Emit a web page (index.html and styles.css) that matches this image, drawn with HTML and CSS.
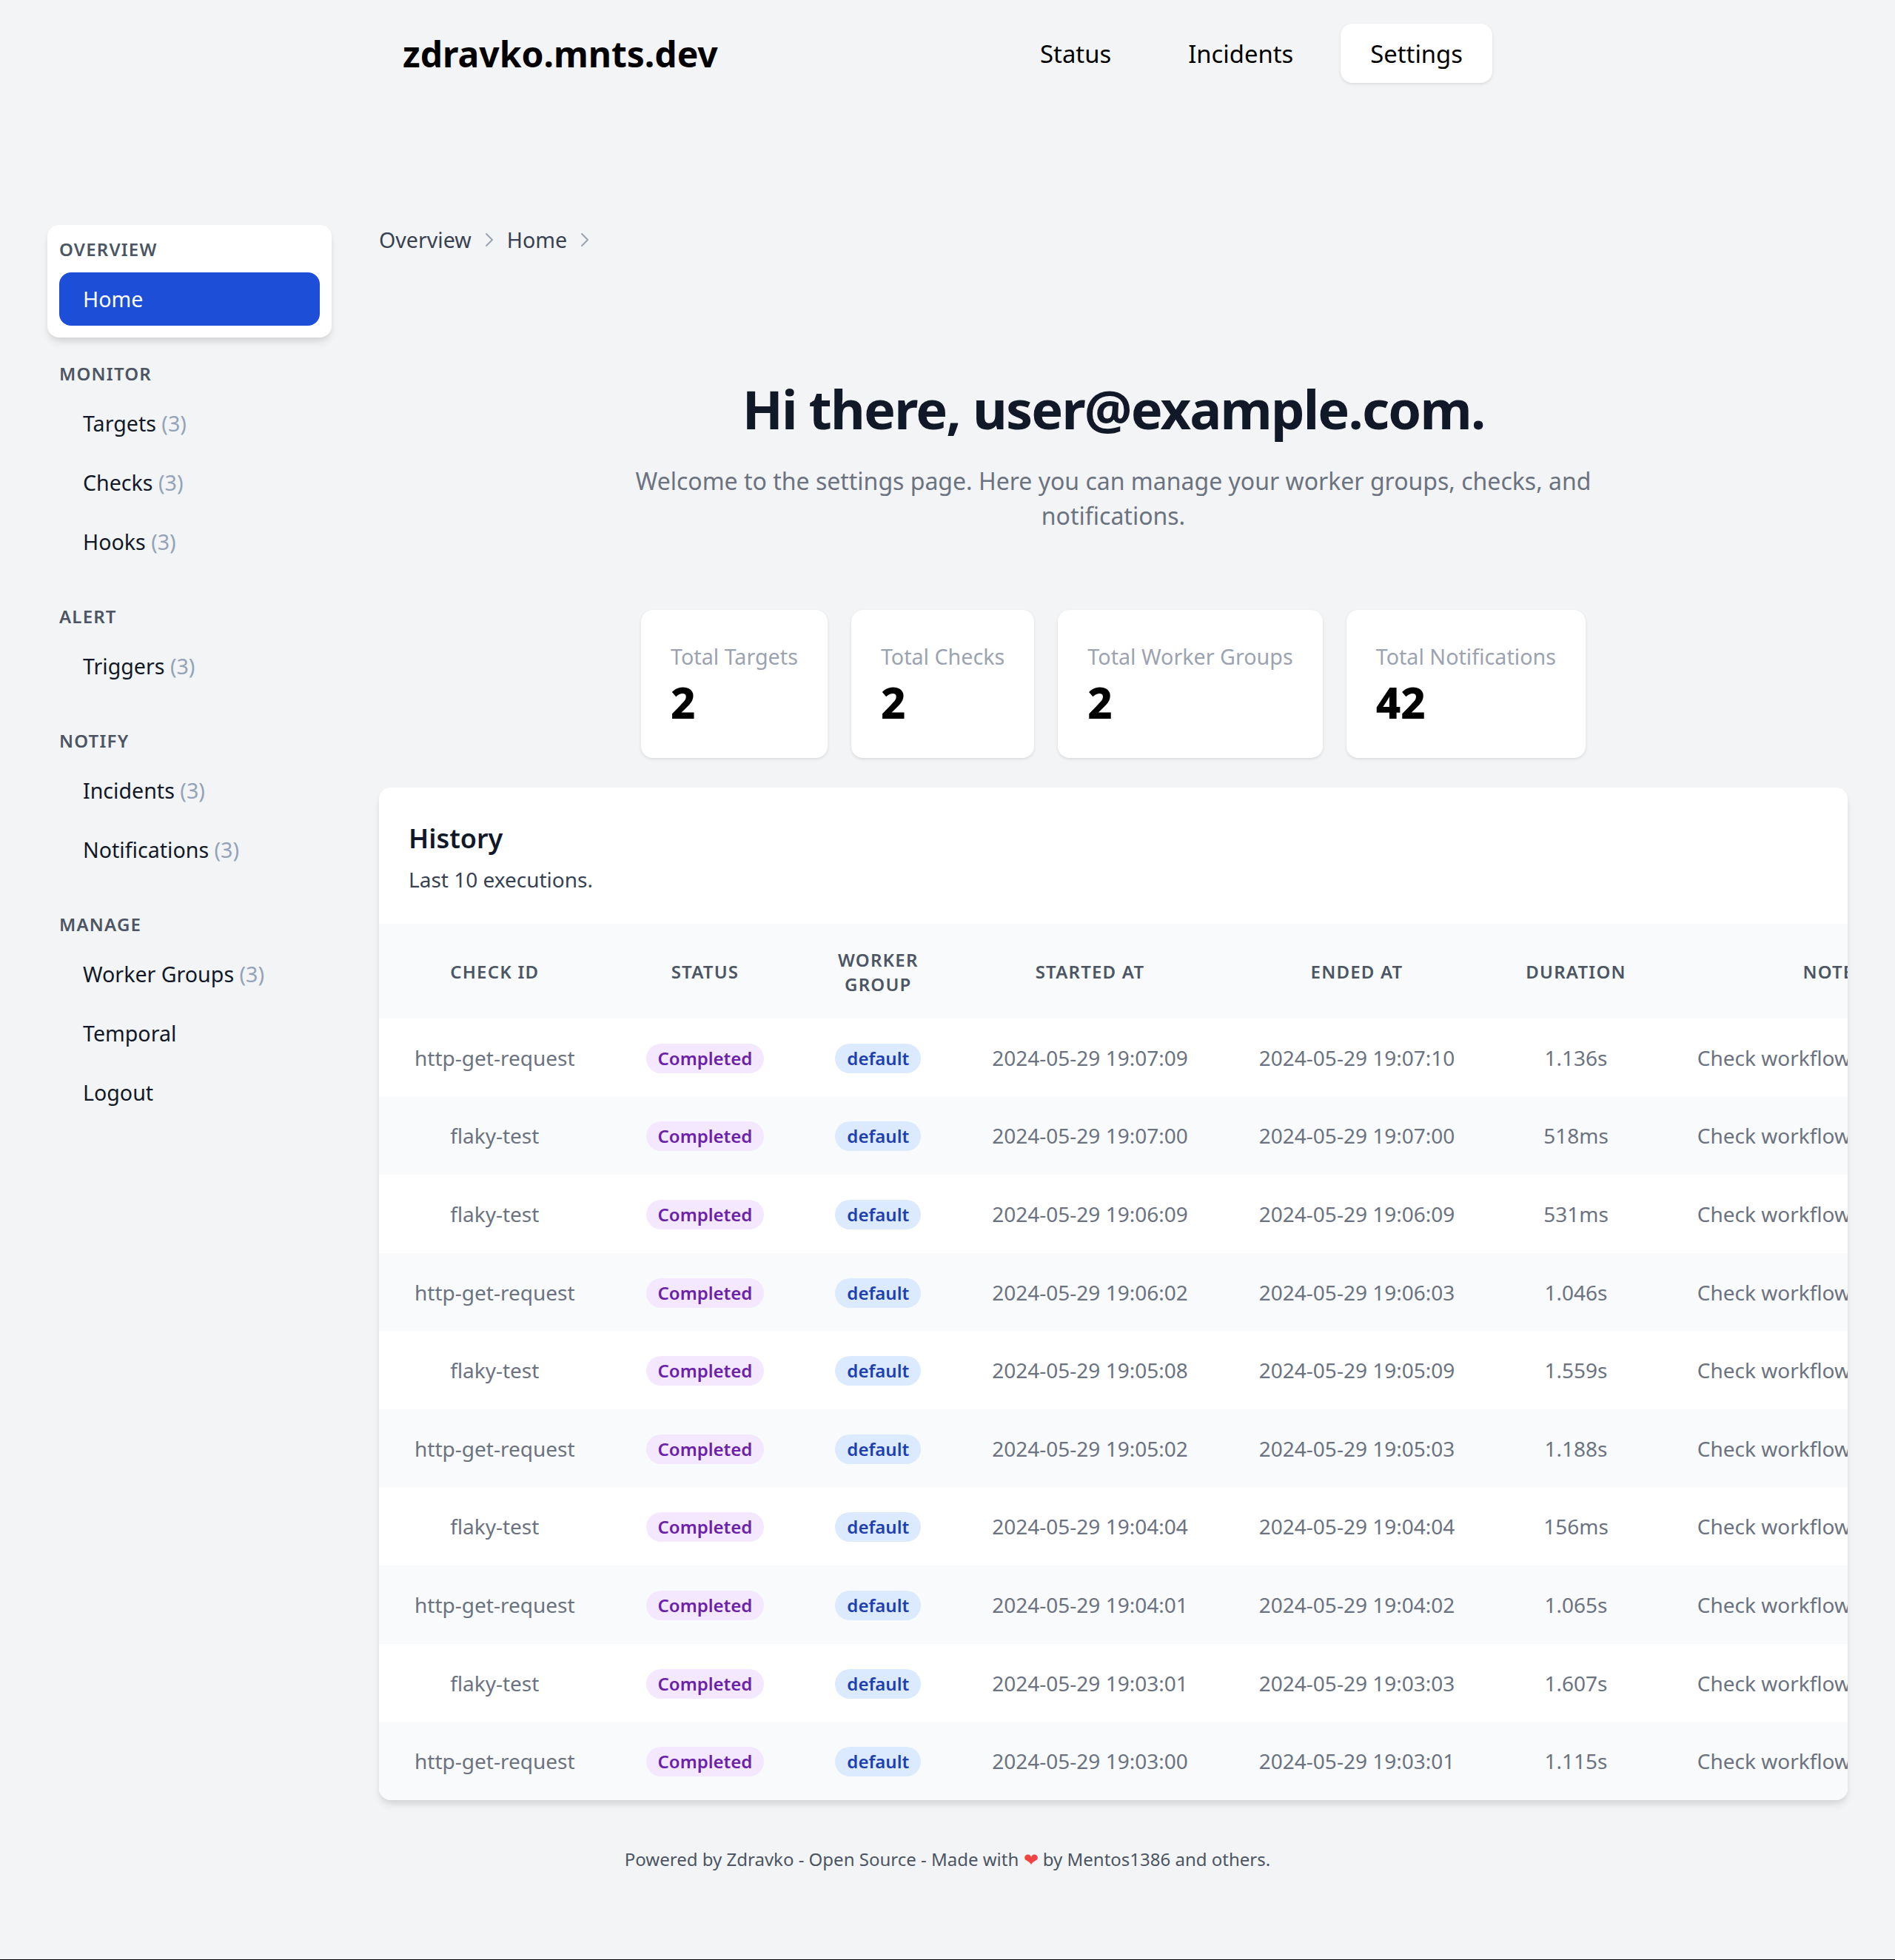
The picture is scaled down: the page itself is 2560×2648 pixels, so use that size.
FILE: index.html
```html
<!DOCTYPE html>
<html lang="en">
  <head>
    <meta charset="UTF-8" />
    <meta name="viewport" content="width=device-width, initial-scale=1.0" />
    <title>Zdravko - Settings</title>
    <link rel="stylesheet" href="styles.css">
  </head>

  <body>
    <header class="topbar">
      <a class="logo" href="#">zdravko.mnts.dev</a>
      <nav class="topnav">
        <a href="#">Status</a>
        <a href="#">Incidents</a>
        <a href="#" class="valgt">Settings</a>
      </nav>
    </header>

    <div class="layout">
      <aside class="sidebar">
        <section class="menu menu_active">
          <h3>Overview</h3>
          <a href="#" class="valgt">Home</a>
        </section>
        <section class="menu">
          <h3>Monitor</h3>
          <a href="#">Targets <span>(3)</span></a>
          <a href="#">Checks <span>(3)</span></a>
          <a href="#">Hooks <span>(3)</span></a>
        </section>
        <section class="menu">
          <h3>Alert</h3>
          <a href="#">Triggers <span>(3)</span></a>
        </section>
        <section class="menu">
          <h3>Notify</h3>
          <a href="#">Incidents <span>(3)</span></a>
          <a href="#">Notifications <span>(3)</span></a>
        </section>
        <section class="menu">
          <h3>Manage</h3>
          <a href="#">Worker Groups <span>(3)</span></a>
          <a href="#">Temporal</a>
          <a href="#">Logout</a>
        </section>
      </aside>

      <main class="content">
        <ol class="breadcrumb">
          <li>Overview</li>
          <li class="chevron">
            <svg viewBox="0 0 6 10" width="12" height="20"><path d="M1 1l4 4-4 4" fill="none" stroke="#9ca3af" stroke-width="1" stroke-linecap="round" stroke-linejoin="round" /></svg>
          </li>
          <li>Home</li>
          <li class="chevron">
            <svg viewBox="0 0 6 10" width="12" height="20"><path d="M1 1l4 4-4 4" fill="none" stroke="#9ca3af" stroke-width="1" stroke-linecap="round" stroke-linejoin="round" /></svg>
          </li>
        </ol>

        <section class="intro">
          <h1>Hi there, user@example.com.</h1>
          <p>Welcome to the settings page. Here you can manage your worker groups, checks, and notifications.</p>
        </section>

        <section class="stats">
          <article class="stat"><p>Total Targets</p><strong>2</strong></article>
          <article class="stat"><p>Total Checks</p><strong>2</strong></article>
          <article class="stat"><p>Total Worker Groups</p><strong>2</strong></article>
          <article class="stat"><p>Total Notifications</p><strong>42</strong></article>
        </section>

        <section class="history">
          <div class="history_head">
            <h2>History</h2>
            <p>Last 10 executions.</p>
          </div>
          <table>
            <thead>
              <tr>
                <th>Check ID</th>
                <th>Status</th>
                <th>Worker Group</th>
                <th>Started At</th>
                <th>Ended At</th>
                <th>Duration</th>
                <th>Note</th>
              </tr>
            </thead>
            <tbody>
              <tr><td>http-get-request</td><td><span class="badge done">Completed</span></td><td><span class="badge group">default</span></td><td>2024-05-29 19:07:09</td><td>2024-05-29 19:07:10</td><td>1.136s</td><td>Check workflow completed</td></tr>
              <tr><td>flaky-test</td><td><span class="badge done">Completed</span></td><td><span class="badge group">default</span></td><td>2024-05-29 19:07:00</td><td>2024-05-29 19:07:00</td><td>518ms</td><td>Check workflow completed</td></tr>
              <tr><td>flaky-test</td><td><span class="badge done">Completed</span></td><td><span class="badge group">default</span></td><td>2024-05-29 19:06:09</td><td>2024-05-29 19:06:09</td><td>531ms</td><td>Check workflow completed</td></tr>
              <tr><td>http-get-request</td><td><span class="badge done">Completed</span></td><td><span class="badge group">default</span></td><td>2024-05-29 19:06:02</td><td>2024-05-29 19:06:03</td><td>1.046s</td><td>Check workflow completed</td></tr>
              <tr><td>flaky-test</td><td><span class="badge done">Completed</span></td><td><span class="badge group">default</span></td><td>2024-05-29 19:05:08</td><td>2024-05-29 19:05:09</td><td>1.559s</td><td>Check workflow completed</td></tr>
              <tr><td>http-get-request</td><td><span class="badge done">Completed</span></td><td><span class="badge group">default</span></td><td>2024-05-29 19:05:02</td><td>2024-05-29 19:05:03</td><td>1.188s</td><td>Check workflow completed</td></tr>
              <tr><td>flaky-test</td><td><span class="badge done">Completed</span></td><td><span class="badge group">default</span></td><td>2024-05-29 19:04:04</td><td>2024-05-29 19:04:04</td><td>156ms</td><td>Check workflow completed</td></tr>
              <tr><td>http-get-request</td><td><span class="badge done">Completed</span></td><td><span class="badge group">default</span></td><td>2024-05-29 19:04:01</td><td>2024-05-29 19:04:02</td><td>1.065s</td><td>Check workflow completed</td></tr>
              <tr><td>flaky-test</td><td><span class="badge done">Completed</span></td><td><span class="badge group">default</span></td><td>2024-05-29 19:03:01</td><td>2024-05-29 19:03:03</td><td>1.607s</td><td>Check workflow completed</td></tr>
              <tr><td>http-get-request</td><td><span class="badge done">Completed</span></td><td><span class="badge group">default</span></td><td>2024-05-29 19:03:00</td><td>2024-05-29 19:03:01</td><td>1.115s</td><td>Check workflow completed</td></tr>
            </tbody>
          </table>
        </section>
      </main>
    </div>

    <footer class="pagefoot">
      Powered by Zdravko - Open Source - Made with <span class="heart">❤</span> by Mentos1386 and others.
    </footer>
  </body>
</html>
```

FILE: styles.css
```css
* {
  box-sizing: border-box;
  margin: 0;
  padding: 0;
}

html {
  background-color: #000;
}

body {
  background-color: #f3f4f6;
  color: #111827;
  font-family: "Noto Sans", sans-serif;
  font-size: 28px;
  height: 2647px;
  overflow: hidden;
}

a {
  color: inherit;
  text-decoration: none;
}

.topbar {
  display: flex;
  justify-content: space-between;
  align-items: center;
  width: 1472px;
  margin: 0 auto;
  padding-top: 32px;
}

.logo {
  color: #000;
  font-size: 48px;
  font-weight: 700;
}

.topnav {
  display: flex;
  gap: 24px;
}

.topnav a {
  color: #000;
  font-size: 32.8px;
  height: 80px;
  line-height: 82px;
  padding: 0 40px;
  border-radius: 16px;
}

.topnav .valgt {
  background-color: #fff;
  box-shadow: 0 2px 4px rgba(0, 0, 0, 0.1);
}

.layout {
  display: flex;
  gap: 64px;
  padding: 192px 64px 0;
}

.sidebar {
  display: flex;
  flex-direction: column;
  gap: 16px;
  flex: 0 0 384px;
}

.menu {
  display: flex;
  flex-direction: column;
  gap: 8px;
  padding: 16px;
}

.menu_active {
  background-color: #fff;
  border-radius: 16px;
  box-shadow: 0 8px 12px -2px rgba(0, 0, 0, 0.1), 0 4px 8px -2px rgba(0, 0, 0, 0.06);
}

.menu h3 {
  color: #4b5563;
  font-size: 24px;
  font-weight: 600;
  line-height: 34px;
  letter-spacing: 1.2px;
  text-transform: uppercase;
  margin-bottom: 6px;
}

.menu a {
  color: #111827;
  font-size: 28.6px;
  line-height: 72px;
  padding: 0 32px;
  border-radius: 16px;
}

.menu a span {
  color: #94a3b8;
}

.menu .valgt {
  background-color: #1d4ed8;
  color: #fff;
}

.content {
  flex: 1;
  min-width: 0;
}

.breadcrumb {
  display: flex;
  align-items: center;
  gap: 18px;
  list-style: none;
  color: #374151;
  font-size: 28.6px;
  line-height: 40px;
}

.chevron {
  display: flex;
}

.intro {
  text-align: center;
  margin-top: 168px;
}

.intro h1 {
  color: #111827;
  font-size: 72px;
  font-weight: 700;
  line-height: 80px;
  letter-spacing: -1.8px;
}

.intro p {
  max-width: 1344px;
  margin: 34px auto 0;
  color: #6b7280;
  font-size: 32px;
  line-height: 47px;
}

.stats {
  display: flex;
  justify-content: center;
  gap: 32px;
  margin-top: 104px;
}

.stat {
  height: 200px;
  padding: 40px;
  background-color: #fff;
  border-radius: 16px;
  box-shadow: 0 2px 4px rgba(0, 0, 0, 0.1);
}

.stat p {
  color: #9ca3af;
  font-size: 28.7px;
  line-height: 40px;
  margin-top: 3px;
}

.stat strong {
  display: block;
  color: #000;
  font-size: 58px;
  font-weight: 800;
  line-height: 72px;
  margin-top: 6px;
}

.history {
  margin-top: 40px;
  background-color: #fff;
  border-radius: 16px;
  box-shadow: 0 8px 12px -2px rgba(0, 0, 0, 0.1), 0 4px 8px -2px rgba(0, 0, 0, 0.06);
  overflow: hidden;
}

.history_head {
  height: 184px;
  padding: 40px;
}

.history_head h2 {
  color: #111827;
  font-size: 36px;
  font-weight: 600;
  line-height: 58px;
}

.history_head p {
  color: #374151;
  font-size: 28px;
  line-height: 52px;
}

table {
  border-collapse: collapse;
  width: 100%;
}

th {
  height: 128px;
  padding: 1px 48px 0;
  background-color: #f9fafb;
  color: #4b5563;
  font-size: 24px;
  font-weight: 600;
  line-height: 33px;
  letter-spacing: 1.2px;
  text-transform: uppercase;
}

td {
  height: 105.6px;
  padding: 0 48px;
  color: #6b7280;
  font-size: 28px;
  text-align: center;
  white-space: nowrap;
}

tbody tr:nth-child(even) {
  background-color: #f9fafb;
}

.badge {
  display: inline-block;
  margin-top: 2px;
  padding: 0 16px;
  border-radius: 20px;
  font-size: 24px;
  font-weight: 600;
  line-height: 40px;
}

.done {
  background-color: #f3e8ff;
  color: #6b21a8;
}

.group {
  background-color: #dbeafe;
  color: #1e40af;
}

.pagefoot {
  margin-top: 64px;
  color: #4b5563;
  font-size: 24px;
  line-height: 32px;
  text-align: center;
}

.heart {
  color: #ef4444;
}
```
